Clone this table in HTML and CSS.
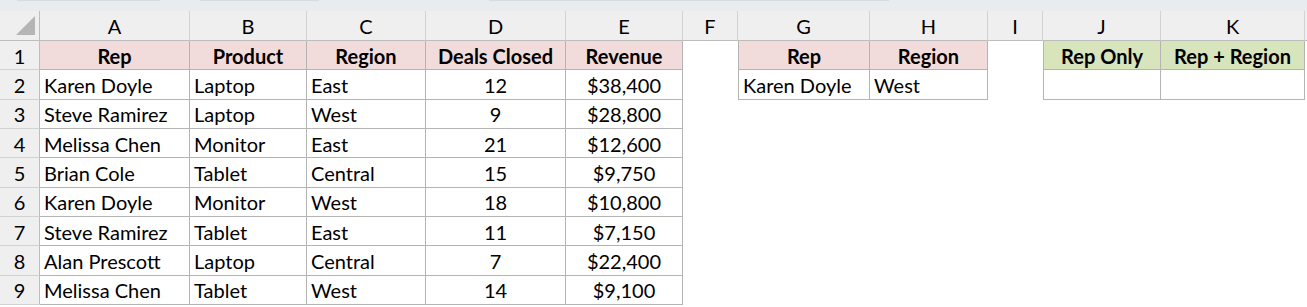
FILE: index.html
```html
<!DOCTYPE html>
<html>
<head>
<meta charset="utf-8">
<link rel="stylesheet" href="styles.css">
</head>
<body>
<div class="topbar">
  <div class="tb-seg tb-a"></div>
  <div class="tb-seg tb-b"></div>
  <div class="tb-seg tb-c"></div>
</div>
<div class="sheet">
  <div class="ch corner"><span class="tri"></span></div>
  <div class="ch">A</div><div class="ch">B</div><div class="ch">C</div><div class="ch">D</div><div class="ch">E</div><div class="ch">F</div><div class="ch">G</div><div class="ch">H</div><div class="ch">I</div><div class="ch">J</div><div class="ch">K</div><div class="ch fill"></div>

  <div class="rh">1</div>
  <div class="c h pink">Rep</div><div class="c h pink">Product</div><div class="c h pink">Region</div><div class="c h pink">Deals Closed</div><div class="c h pink">Revenue</div>
  <div class="e"></div>
  <div class="c h pink lb">Rep</div><div class="c h pink">Region</div>
  <div class="e"></div>
  <div class="c h green lb">Rep Only</div><div class="c h green">Rep + Region</div>
  <div class="e"></div>

  <div class="rh">2</div>
  <div class="c">Karen Doyle</div><div class="c">Laptop</div><div class="c">East</div><div class="c n">12</div><div class="c n">$38,400</div>
  <div class="e"></div>
  <div class="c lb">Karen Doyle</div><div class="c">West</div>
  <div class="e"></div>
  <div class="c lb"></div><div class="c"></div>
  <div class="e"></div>

  <div class="rh">3</div>
  <div class="c">Steve Ramirez</div><div class="c">Laptop</div><div class="c">West</div><div class="c n">9</div><div class="c n">$28,800</div>
  <div class="e span7"></div>

  <div class="rh">4</div>
  <div class="c">Melissa Chen</div><div class="c">Monitor</div><div class="c">East</div><div class="c n">21</div><div class="c n">$12,600</div>
  <div class="e span7"></div>

  <div class="rh">5</div>
  <div class="c">Brian Cole</div><div class="c">Tablet</div><div class="c">Central</div><div class="c n">15</div><div class="c n">$9,750</div>
  <div class="e span7"></div>

  <div class="rh">6</div>
  <div class="c">Karen Doyle</div><div class="c">Monitor</div><div class="c">West</div><div class="c n">18</div><div class="c n">$10,800</div>
  <div class="e span7"></div>

  <div class="rh">7</div>
  <div class="c">Steve Ramirez</div><div class="c">Tablet</div><div class="c">East</div><div class="c n">11</div><div class="c n">$7,150</div>
  <div class="e span7"></div>

  <div class="rh">8</div>
  <div class="c">Alan Prescott</div><div class="c">Laptop</div><div class="c">Central</div><div class="c n">7</div><div class="c n">$22,400</div>
  <div class="e span7"></div>

  <div class="rh">9</div>
  <div class="c">Melissa Chen</div><div class="c">Tablet</div><div class="c">West</div><div class="c n">14</div><div class="c n">$9,100</div>
  <div class="e span7"></div>
</div>
</body>
</html>
```
FILE: styles.css
```css
* { box-sizing: border-box; }
html, body { margin: 0; padding: 0; background: #ffffff; }
body {
  font-family: Lato, "Liberation Sans", sans-serif;
  font-size: 20px;
  color: #000;
  width: 1307px;
  height: 307px;
  overflow: hidden;
}
.topbar {
  height: 11px;
  background: #e9ecef;
  display: flex;
  gap: 0;
  padding: 0;
}
.tb-seg { height: 1px; background: #d9dcdf; }
.tb-a { margin-left: 17px; width: 143px; }
.tb-b { margin-left: 40px; width: 119px; }
.tb-c { margin-left: 170px; width: 400px; }

.sheet {
  display: grid;
  grid-template-columns: 40px 150px 117px 119px 140px 117px 55px 132px 118px 55px 118px 144px 2px;
  grid-template-rows: 30px repeat(9, 29.33px);
}
.ch {
  background: #efefef;
  border-right: 1px solid #d2d2d2;
  border-bottom: 1px solid #bdbdbd;
  display: flex;
  align-items: center;
  justify-content: center;
  padding-top: 1px;
}
.ch.corner {
  position: relative;
  border-right: 1px solid #bdbdbd;
}
.ch.fill { border-right: none; }
.tri {
  position: absolute;
  right: 4px;
  bottom: 5px;
  width: 0;
  height: 0;
  border-style: solid;
  border-width: 0 0 19px 19px;
  border-color: transparent transparent #b5b5b5 transparent;
}
.rh {
  background: #efefef;
  border-right: 1px solid #bdbdbd;
  border-bottom: 1px solid #d2d2d2;
  display: flex;
  align-items: center;
  justify-content: center;
  padding-top: 1px;
}
.c {
  border-right: 1px solid #b4b4b4;
  border-bottom: 1px solid #b4b4b4;
  display: flex;
  align-items: center;
  padding: 1px 0 0 4px;
  white-space: nowrap;
  overflow: hidden;
}
.c.lb { border-left: 1px solid #b4b4b4; }
.c.h { font-weight: 700; justify-content: center; padding-left: 0; }
.c.n { justify-content: center; padding-left: 0; }
.pink { background: #f2dcdb; }
.green { background: #d8e4bc; }
.e { background: #fff; }
.span7 { grid-column: span 7; }
```
